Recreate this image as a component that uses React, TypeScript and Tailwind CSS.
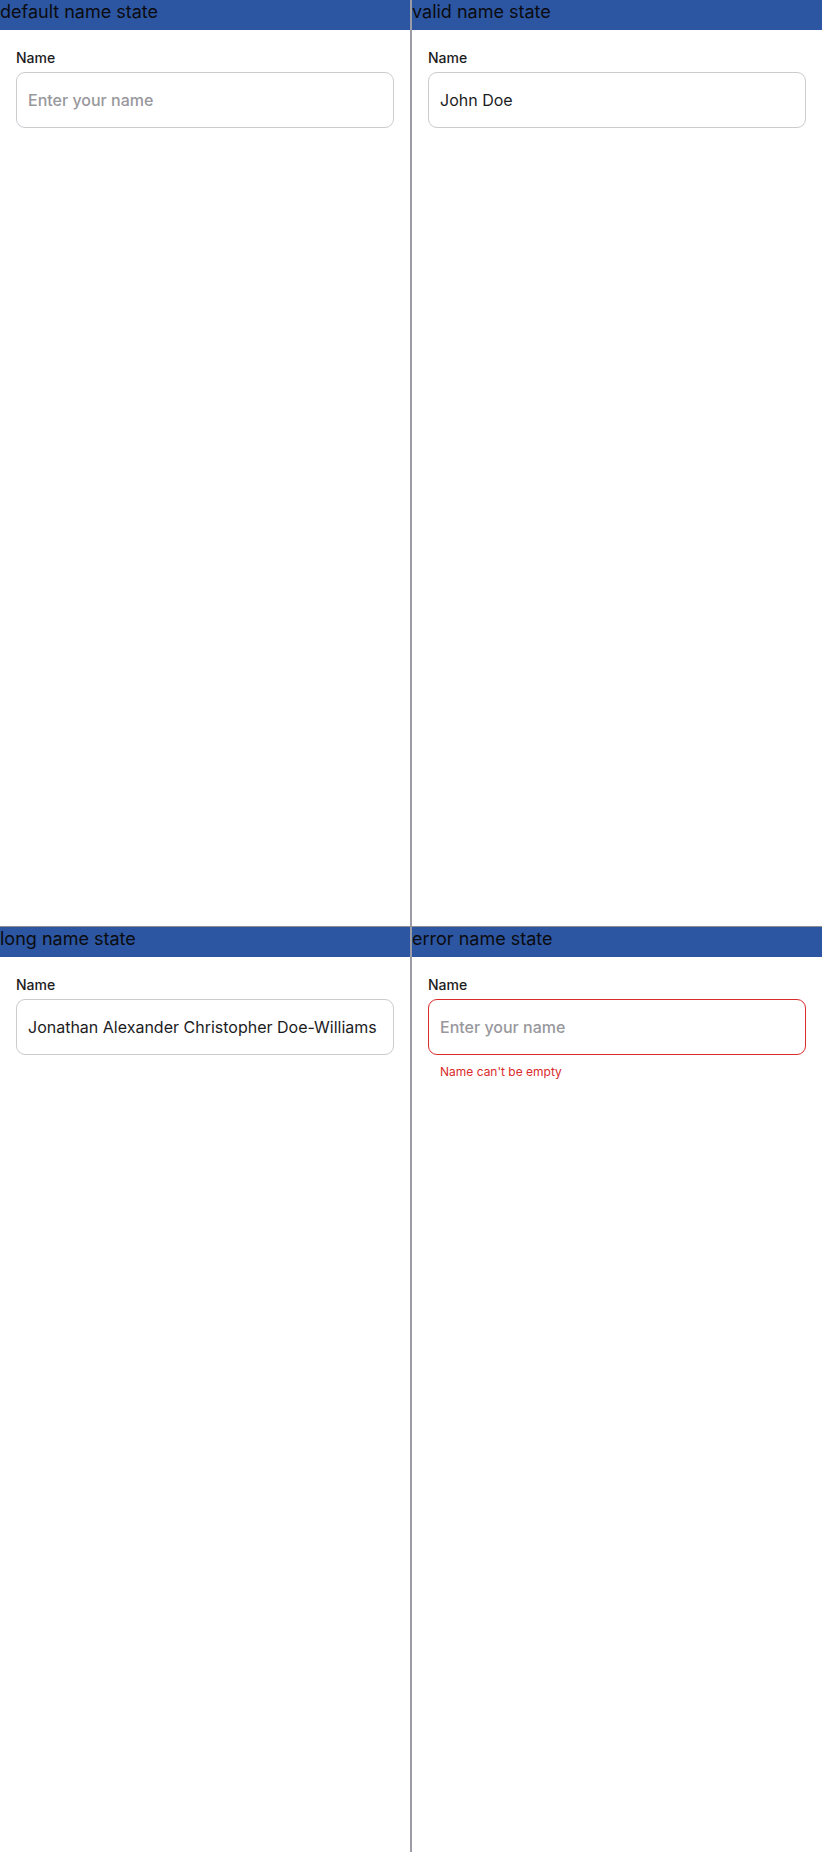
const font = { fontFamily: "Inter, 'Noto Sans', sans-serif" };

type State = {
  title: string;
  value?: string;
  error?: string;
};

const states: State[] = [
  { title: "default name state" },
  { title: "valid name state", value: "John Doe" },
  { title: "long name state", value: "Jonathan Alexander Christopher Doe-Williams" },
  { title: "error name state", error: "Name can't be empty" },
];

function NameField({ value, error }: { value?: string; error?: string }) {
  return (
    <div className="flex flex-col px-4 pt-[17px]">
      <label className="text-[14px] leading-[22px] font-medium text-[#1c1c1e] mb-[3px]">Name</label>
      <input
        readOnly
        value={value ?? ""}
        placeholder="Enter your name"
        className={
          error
            ? "h-[56px] w-full rounded-[9px] border border-[#d92b2b] bg-white px-[11px] text-[16px] text-[#1c1c1e] outline-none placeholder:text-[#98989d] placeholder:font-medium"
            : "h-[56px] w-full rounded-[9px] border border-[#cbcbd0] bg-white px-[11px] text-[16px] text-[#1c1c1e] outline-none placeholder:text-[#98989d] placeholder:font-medium"
        }
      />
      {error && <p className="mt-[9px] pl-[12px] text-[12px] leading-[16px] text-[#d92b2b]">{error}</p>}
    </div>
  );
}

export default function App() {
  return (
    <div className="grid grid-cols-2 grid-rows-2 w-[822px] h-[1852px] bg-white" style={font}>
      {states.map((s, i) => (
        <div
          key={s.title}
          className={
            (i % 2 === 0 ? "border-r " : "border-l ") +
            (i >= 2 ? "border-t border-t-[#8e8e93] " : "") +
            "border-[#9c9ca6] min-h-0 flex flex-col"
          }
        >
          <div className="h-[30px] bg-[#2c56a1] text-[18px] leading-[24px] text-[#0b0b10]">{s.title}</div>
          <NameField value={s.value} error={s.error} />
        </div>
      ))}
    </div>
  );
}
